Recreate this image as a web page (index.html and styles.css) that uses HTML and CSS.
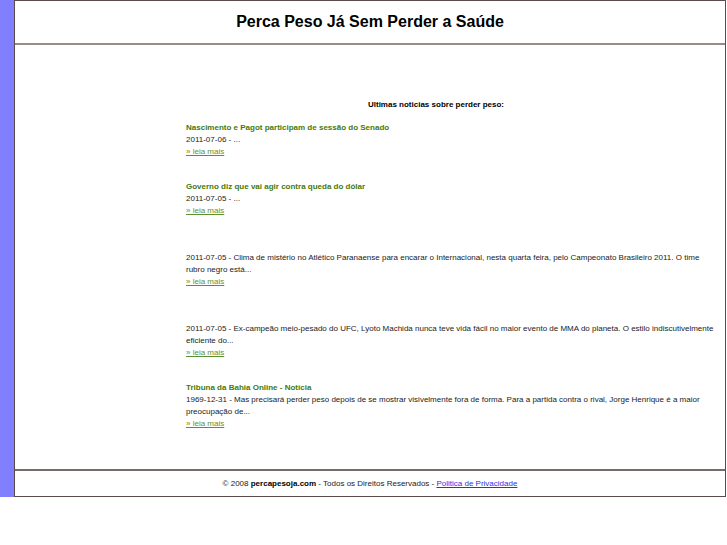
FILE: index.html
```html
<!DOCTYPE html>
<html lang="pt">
<head>
<meta charset="utf-8">
<title>Perca Peso Já Sem Perder a Saúde</title>
<link rel="stylesheet" href="styles.css">
</head>
<body>
<div class="page">
  <div class="side"></div>
  <div class="main">
    <div class="header"><h1>Perca Peso Já Sem Perder a Saúde</h1></div>
    <div class="content">
      <div class="heading">Ultimas noticias sobre perder peso:</div>
      <div class="item">
        <a class="title" href="#">Nascimento e Pagot participam de sessão do Senado</a>
        <div class="text">2011-07-06 - ...</div>
        <a class="more" href="#">» leia mais</a>
      </div>
      <div class="item">
        <a class="title" href="#">Governo diz que vai agir contra queda do dólar</a>
        <div class="text">2011-07-05 - ...</div>
        <a class="more" href="#">» leia mais</a>
      </div>
      <div class="item">
        <a class="title" href="#"></a>
        <div class="text">2011-07-05 - Clima de mistério no Atlético Paranaense para encarar o Internacional, nesta quarta feira, pelo Campeonato Brasileiro 2011. O time<br>rubro negro está...</div>
        <a class="more" href="#">» leia mais</a>
      </div>
      <div class="item">
        <a class="title" href="#"></a>
        <div class="text">2011-07-05 - Ex-campeão meio-pesado do UFC, Lyoto Machida nunca teve vida fácil no maior evento de MMA do planeta. O estilo indiscutivelmente eficiente do...</div>
        <a class="more" href="#">» leia mais</a>
      </div>
      <div class="item">
        <a class="title" href="#">Tribuna da Bahia Online - Notícia</a>
        <div class="text">1969-12-31 - Mas precisará perder peso depois de se mostrar visivelmente fora de forma. Para a partida contra o rival, Jorge Henrique é a maior preocupação de...</div>
        <a class="more" href="#">» leia mais</a>
      </div>
    </div>
    <div class="footer">© 2008 <b>percapesoja.com</b> - Todos os Direitos Reservados - <a href="#">Politica de Privacidade</a></div>
  </div>
</div>
</body>
</html>
```
FILE: styles.css
```css
html, body {
  margin: 0;
  padding: 0;
  background: #ffffff;
}
body {
  font-family: "Liberation Sans", Arial, sans-serif;
  color: #222222;
}
.page {
  display: flex;
  width: 727px;
}
.side {
  width: 14px;
  background: #8080ff;
}
.main {
  width: 710px;
  border: 1px solid #5a4a4a;
}
.header {
  height: 42px;
  border-bottom: 2px solid #9a8a8a;
  display: flex;
  align-items: center;
  justify-content: center;
}
.header h1 {
  margin: 0;
  font-size: 16px;
  line-height: 20px;
  font-weight: bold;
  color: #000000;
}
.content {
  padding: 54px 4px 16px 171px;
  font-size: 8px;
  line-height: 12px;
}
.heading {
  font-weight: bold;
  color: #000000;
  text-align: center;
  margin-right: 35px;
  margin-bottom: 11px;
}
.item {
  margin-bottom: 23px;
}
.title {
  display: block;
  min-height: 12px;
  font-weight: bold;
  color: #437a0c;
  text-decoration: none;
}
.text {
  color: #222222;
}
.more {
  display: block;
  color: #5f9030;
  text-decoration: underline;
}
.footer {
  border-top: 2px solid #7a6a6a;
  height: 25px;
  display: flex;
  align-items: center;
  justify-content: center;
  font-size: 8px;
  color: #222222;
  white-space: pre;
}
.footer b {
  color: #000000;
}
.footer a {
  color: #2f2fe6;
  text-decoration: underline;
}
```
